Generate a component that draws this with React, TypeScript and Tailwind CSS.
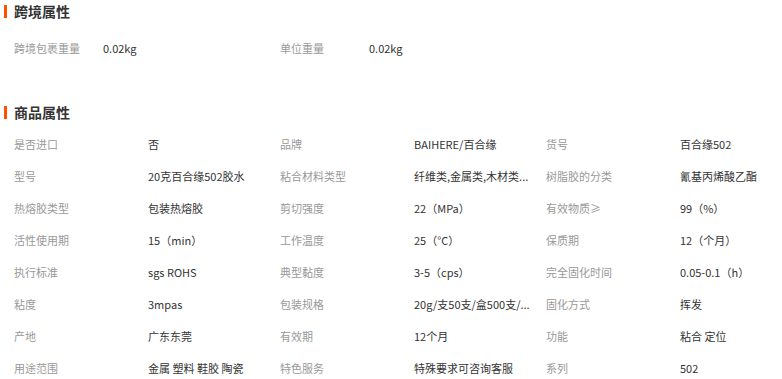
import React from 'react';

const crossBorder = [
  ['跨境包裹重量', '0.02kg'],
  ['单位重量', '0.02kg'],
];

const attrs: [string, string][] = [
  ['是否进口', '否'],
  ['品牌', 'BAIHERE/百合缘'],
  ['货号', '百合缘502'],
  ['型号', '20克百合缘502胶水'],
  ['粘合材料类型', '纤维类,金属类,木材类...'],
  ['树脂胶的分类', '氰基丙烯酸乙酯'],
  ['热熔胶类型', '包装热熔胶'],
  ['剪切强度', '22（MPa）'],
  ['有效物质≥', '99（%）'],
  ['活性使用期', '15（min）'],
  ['工作温度', '25（°C）'],
  ['保质期', '12（个月）'],
  ['执行标准', 'sgs ROHS'],
  ['典型黏度', '3-5（cps）'],
  ['完全固化时间', '0.05-0.1（h）'],
  ['粘度', '3mpas'],
  ['包装规格', '20g/支50支/盒500支/...'],
  ['固化方式', '挥发'],
  ['产地', '广东东莞'],
  ['有效期', '12个月'],
  ['功能', '粘合 定位'],
  ['用途范围', '金属 塑料 鞋胶 陶瓷'],
  ['特色服务', '特殊要求可咨询客服'],
  ['系列', '502'],
];

const Heading = ({ title }: { title: string }) => (
  <div className="flex items-center h-[22px]">
    <span className="ml-[4px] w-[3px] h-[13px] bg-[#ff5000]" />
    <span className="ml-[7px] text-[14px] font-bold text-[#333]">{title}</span>
  </div>
);

export default function App() {
  return (
    <div className="w-[782px] h-[379px] overflow-hidden bg-white font-['Noto_Sans_CJK_SC',sans-serif] text-[11px]">
      <Heading title="跨境属性" />
      <div className="mt-[10px] pl-[14px] grid grid-cols-[89px_177px_89px_1fr]">
        {crossBorder.map(([k, v]) => (
          <React.Fragment key={k}>
            <div className="h-8 flex items-center text-[#999]">{k}</div>
            <div className="h-8 flex items-center text-[#333]">{v}</div>
          </React.Fragment>
        ))}
      </div>
      <div className="mt-[37px]">
        <Heading title="商品属性" />
      </div>
      <div className="mt-[5px] pl-[14px] grid grid-cols-[134px_132px_134px_132px_134px_1fr]">
        {attrs.map(([k, v]) => (
          <React.Fragment key={k}>
            <div className="h-8 flex items-center text-[#999] whitespace-nowrap">{k}</div>
            <div className="h-8 flex items-center text-[#333] whitespace-nowrap">{v}</div>
          </React.Fragment>
        ))}
      </div>
    </div>
  );
}
